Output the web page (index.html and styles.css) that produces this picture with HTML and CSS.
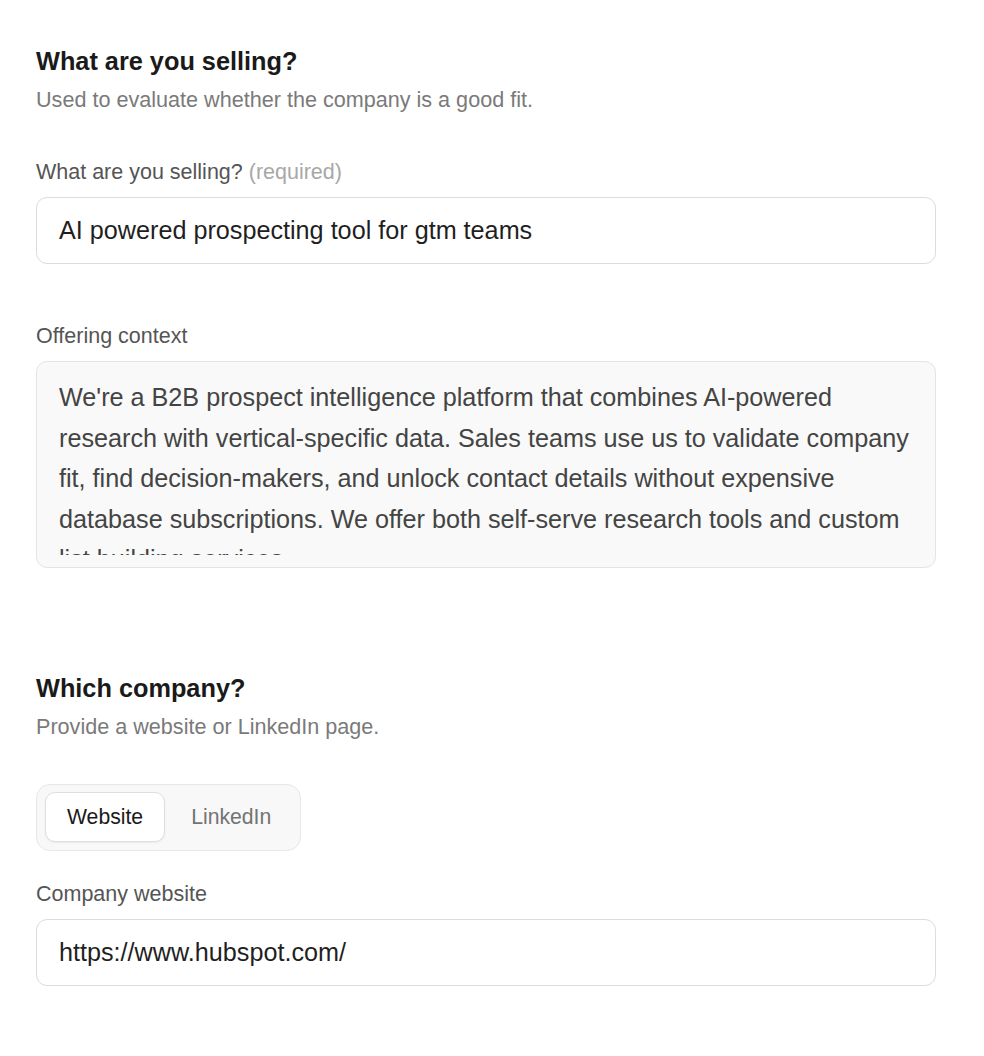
FILE: index.html
```html
<!DOCTYPE html>
<html>
<head>
<meta charset="utf-8">
<link rel="stylesheet" href="styles.css">
</head>
<body>
<div class="page">
  <section class="section">
    <h2 class="title">What are you selling?</h2>
    <p class="subtitle">Used to evaluate whether the company is a good fit.</p>
    <div class="field first">
      <label class="label">What are you selling? <span class="req">(required)</span></label>
      <div class="input">AI powered prospecting tool for gtm teams</div>
    </div>
    <div class="field second">
      <label class="label">Offering context</label>
      <div class="textarea"><div class="textarea-content">We're a B2B prospect intelligence platform that combines AI-powered research with vertical-specific data. Sales teams use us to validate company fit, find decision-makers, and unlock contact details without expensive database subscriptions. We offer both self-serve research tools and custom list building services.</div></div>
    </div>
  </section>
  <section class="section company">
    <h2 class="title">Which company?</h2>
    <p class="subtitle">Provide a website or LinkedIn page.</p>
    <div class="segment">
      <button class="seg-btn active">Website</button>
      <button class="seg-btn alt">LinkedIn</button>
    </div>
    <div class="field third">
      <label class="label">Company website</label>
      <div class="input">https://www.hubspot.com/</div>
    </div>
  </section>
</div>
</body>
</html>
```

FILE: styles.css
```css
* { box-sizing: border-box; }
html, body { margin: 0; padding: 0; background: #ffffff; }
body {
  font-family: "Liberation Sans", Arial, Helvetica, sans-serif;
  color: #1a1a1a;
}
.page {
  width: 900px;
  margin-left: 36px;
  padding-top: 46px;
}
.section { display: flex; flex-direction: column; }
.title {
  margin: 0;
  font-size: 25.3px;
  line-height: 30px;
  font-weight: 700;
  color: #1a1a1a;
}
.subtitle {
  margin: 11px 0 0;
  font-size: 21.6px;
  line-height: 26px;
  color: #7a7a7a;
}
.field { display: flex; flex-direction: column; }
.field.first { margin-top: 46px; }
.field.second { margin-top: 59px; }
.field.third { margin-top: 30px; }
.label {
  font-size: 21.5px;
  line-height: 26px;
  color: #555555;
  margin-bottom: 12px;
}
.req { color: #a8a8a8; }
.input {
  height: 67px;
  border: 1px solid #dcdcdc;
  border-radius: 11px;
  padding: 0 22px;
  display: flex;
  align-items: center;
  font-size: 25.2px;
  color: #1f1f1f;
  background: #ffffff;
}
.textarea {
  height: 207px;
  border: 1px solid #e3e5e3;
  border-radius: 11px;
  padding: 15px 22px 12px;
  background: #f8f9f8;
}
.textarea-content {
  height: 178px;
  overflow: hidden;
  font-size: 25.2px;
  line-height: 40.6px;
  color: #444444;
}
.section.company { margin-top: 105px; }
.segment {
  margin-top: 44px;
  align-self: flex-start;
  display: flex;
  gap: 2px;
  padding: 7px 8px 8px;
  border: 1px solid #e6e8e6;
  border-radius: 14px;
  background: #f7f8f7;
}
.seg-btn {
  height: 50px;
  font-family: "Liberation Sans", Arial, Helvetica, sans-serif;
  font-size: 21.2px;
  color: #737373;
  background: transparent;
  border: 1px solid transparent;
  border-radius: 10px;
  padding: 0 21px;
}
.seg-btn.alt { padding: 0 20px 0 23px; }
.seg-btn.active {
  background: #ffffff;
  color: #1a1a1a;
  border-color: #dedede;
  box-shadow: 0 1px 2px rgba(0,0,0,0.06);
}
```
